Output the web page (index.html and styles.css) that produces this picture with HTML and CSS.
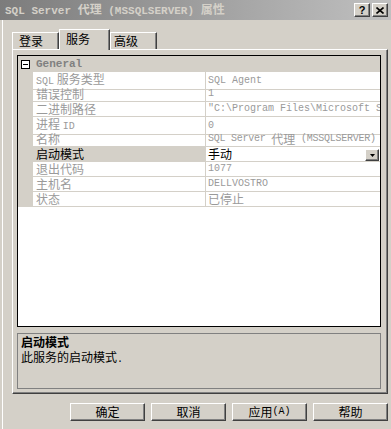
FILE: index.html
```html
<!DOCTYPE html>
<html>
<head>
<meta charset="utf-8">
<link rel="stylesheet" href="styles.css">
</head>
<body>
<div class="win">
  <div class="title">
    <span class="ttext"><span class="tl">SQL Server </span>代理<span class="tl"> (MSSQLSERVER) </span>属性</span>
    <div class="tbtns">
      <span class="tb q">?</span>
      <span class="tb"><svg width="8" height="7" viewBox="0 0 8 7"><path d="M0.5 0.5 L7.5 6.5 M7.5 0.5 L0.5 6.5" stroke="#000" stroke-width="1.6" fill="none"/></svg></span>
    </div>
  </div>
  <div class="client">
    <div class="tabs">
      <div class="tab t1">登录</div>
      <div class="tab sel">服务</div>
      <div class="tab t3">高级</div>
    </div>
    <div class="panel">
      <div class="pgrid">
        <div class="cat"><span class="box"><span class="minus"></span></span><span class="catname">General</span></div>
        <div class="row"><div class="g"></div><div class="n"><span class="m">SQL</span> 服务类型</div><div class="v"><span class="m">SQL Agent</span></div></div>
        <div class="row"><div class="g"></div><div class="n">错误控制</div><div class="v"><span class="m">1</span></div></div>
        <div class="row"><div class="g"></div><div class="n">二进制路径</div><div class="v"><span class="m">"C:\Program Files\Microsoft SQL Server\MSSQL.1\MSSQL\Binn\SQLAGENT90.EXE"</span></div></div>
        <div class="row"><div class="g"></div><div class="n">进程 <span class="m">ID</span></div><div class="v"><span class="m">0</span></div></div>
        <div class="row"><div class="g"></div><div class="n">名称</div><div class="v"><span class="m tight">SQL Server </span>代理<span class="m tight"> (MSSQLSERVER)</span></div></div>
        <div class="row active"><div class="g"></div><div class="n">启动模式</div><div class="v"><span>手动</span><span class="dd"><svg width="5" height="3" viewBox="0 0 5 3"><path d="M0 0 H5 L2.5 3 Z" fill="#000"/></svg></span></div></div>
        <div class="row"><div class="g"></div><div class="n">退出代码</div><div class="v"><span class="m">1077</span></div></div>
        <div class="row"><div class="g"></div><div class="n">主机名</div><div class="v"><span class="m">DELLVOSTRO</span></div></div>
        <div class="row"><div class="g"></div><div class="n">状态</div><div class="v">已停止</div></div>
        <div class="fill"></div>
      </div>
      <div class="desc">
        <div class="dtitle">启动模式</div>
        <div class="dtext">此服务的启动模式<span class="m">.</span></div>
      </div>
    </div>
    <div class="buttons">
      <div class="btn">确定</div>
      <div class="btn">取消</div>
      <div class="btn">应用<span class="bl">(A)</span></div>
      <div class="btn">帮助</div>
    </div>
  </div>
</div>
</body>
</html>
```
FILE: styles.css
```css
* { box-sizing: border-box; }
body {
  margin: 0;
  width: 391px;
  height: 429px;
  overflow: hidden;
  background: #d4d0c8;
  font-family: "Noto Sans CJK SC", sans-serif;
  font-size: 12px;
  color: #000;
}
.win { width: 391px; height: 429px; }
.title {
  height: 20px;
  display: flex;
  align-items: center;
  justify-content: space-between;
  background: linear-gradient(to right, #7c7c7c, #c0c0c0);
  padding: 0 3px 0 5px;
}
.ttext {
  color: #d4d0c8;
  font-weight: bold;
  font-size: 12px;
  line-height: 20px;
  white-space: nowrap;
}
.tl { font-family: "Liberation Mono", monospace; font-size: 11px; white-space: pre; }
.tbtns { display: flex; gap: 2px; }
.tb {
  width: 16px;
  height: 14px;
  background: #d4d0c8;
  border: 1px solid;
  border-color: #fff #404040 #404040 #fff;
  box-shadow: inset -1px -1px #808080;
  display: flex;
  align-items: center;
  justify-content: center;
}
.tb.q { font: bold 11px "Liberation Sans", sans-serif; line-height: 12px; }
.client {
  margin-left: 2px;
  border-left: 1px solid #fff;
  height: 409px;
  padding-left: 9px;
}
.tabs {
  display: flex;
  align-items: flex-end;
  height: 29px;
}
.tab {
  height: 17px;
  width: 47px;
  border-top: 1px solid #fff;
  border-left: 1px solid #fff;
  border-right: 1px solid #404040;
  box-shadow: inset -1px 0 #808080;
  background: #d4d0c8;
  padding-left: 6px;
  font-size: 12px;
  line-height: 16px;
}
.tab.t3 { padding-left: 3px; }
.tab.sel {
  width: 51px;
  height: 21px;
  margin-bottom: -1px;
  z-index: 1;
  padding-left: 6px;
  line-height: 17px;
}
.panel {
  width: 376px;
  border: 1px solid;
  border-color: #fff #404040 #404040 #fff;
  box-shadow: inset -1px -1px #808080;
  padding: 5px 6px 4px 4px;
}
.pgrid {
  height: 272px;
  border: 1px solid #000;
  background: #fff;
  display: flex;
  flex-direction: column;
}
.cat {
  height: 16px;
  background: #d4d0c8;
  display: flex;
  align-items: center;
}
.box {
  width: 9px;
  height: 9px;
  margin-left: 3px;
  border: 1px solid #000;
  background: #fff;
  display: flex;
  align-items: center;
  justify-content: center;
}
.minus { width: 5px; height: 1px; background: #000; }
.catname {
  margin-left: 6px;
  font: bold 11px "Liberation Mono", monospace;
  color: #808080;
}
.row {
  display: grid;
  grid-template-columns: 15px 172px 175px;
  height: 15px;
}
.g { background: #d4d0c8; }
.n, .v {
  border-bottom: 1px solid #d4d0c8;
  color: #9a9a9a;
  line-height: 14px;
  white-space: nowrap;
}
.n { padding-left: 3px; }
.v {
  border-left: 1px solid #d4d0c8;
  padding-left: 2px;
  display: flex;
  align-items: center;
  overflow-x: clip;
}
.m { font-family: "Liberation Mono", monospace; font-size: 10px; white-space: pre; }
.m.tight { letter-spacing: -0.25px; }
.row.active .n { background: #d4d0c8; color: #000; }
.row.active .v { color: #000; justify-content: space-between; padding-right: 1px; }
.dd {
  flex: none;
  width: 14px;
  height: 12px;
  margin-top: 2px;
  background: #d4d0c8;
  border: 1px solid;
  border-color: #fff #404040 #404040 #fff;
  box-shadow: inset -1px -1px #808080;
  display: flex;
  align-items: center;
  justify-content: center;
}
.fill { flex: 1; background: #fff; }
.desc {
  margin-top: 6px;
  height: 56px;
  border: 1px solid #808080;
  padding: 0 3px;
  line-height: 15px;
}
.dtitle { font-weight: bold; }
.buttons {
  display: flex;
  gap: 6px;
  margin-top: 9px;
  padding-left: 58px;
}
.btn {
  width: 75px;
  height: 18px;
  border: 1px solid;
  border-color: #fff #404040 #404040 #fff;
  box-shadow: inset -1px -1px #808080;
  background: #d4d0c8;
  display: flex;
  align-items: center;
  justify-content: center;
  font-size: 12px;
  line-height: 16px;
}
.bl { font-family: "Liberation Mono", monospace; font-size: 10px; }
```
